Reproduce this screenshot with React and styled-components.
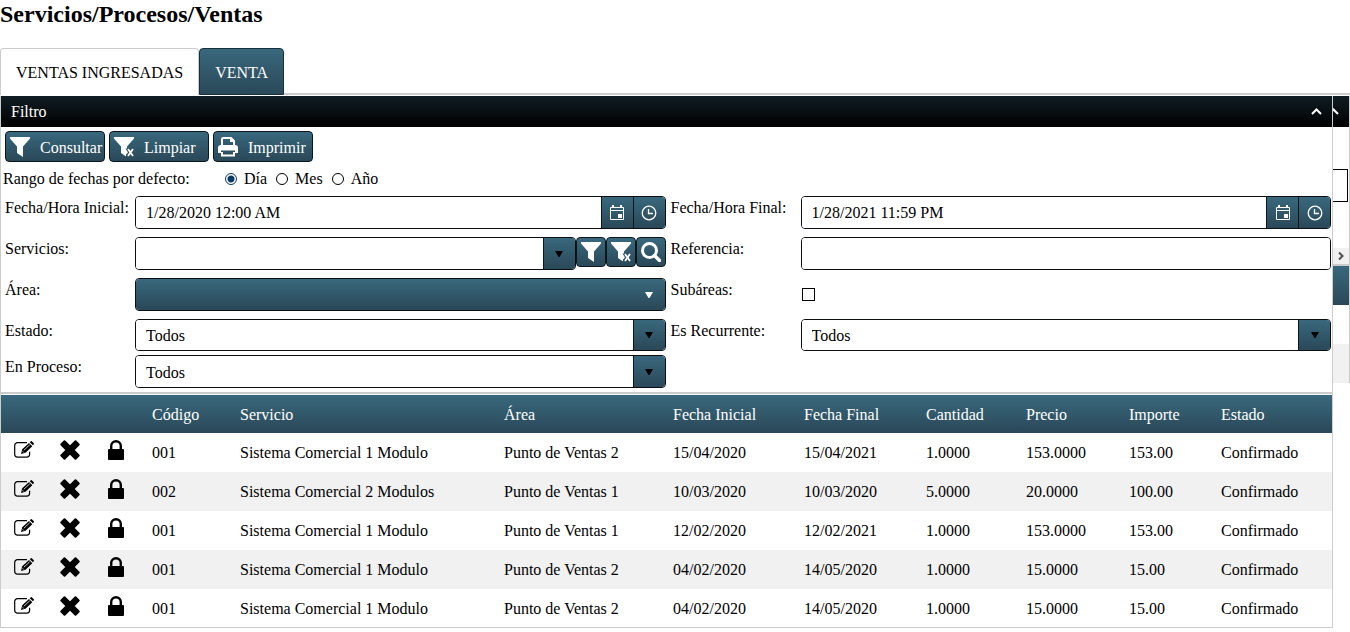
import React from "react";
import styled, { css, createGlobalStyle } from "styled-components";

const GlobalStyle = createGlobalStyle`
  body {
    margin: 0;
    background: #fff;
    color: #000;
    font: 16px/18px "Liberation Serif", "Times New Roman", serif;
  }

  *, *::before, *::after {
    box-sizing: border-box;
  }

  button, input, select {
    font: inherit;
    margin: 0;
  }

  svg {
    flex-shrink: 0;
  }
`;

const steel = css`
  background: linear-gradient(#39687d, #2a4858);
  color: #fff;
`;

const Title = styled.h2`
  margin: 0;
  padding-bottom: 20px;
  font-size: 24px;
  line-height: 28px;
`;

const TabList = styled.div`
  display: flex;
  border-bottom: 2px solid #ccc;
`;

const Tab = styled.button`
  height: 47px;
  margin-bottom: -2px;
  padding: 2px 15px 0;
  border: 1px solid #ccc;
  border-bottom: 0;
  border-radius: 4px 4px 0 0;
  background: #fff;
  color: #000;
  ${props =>
    props.$raised &&
    css`
      ${steel}
      border: 1px solid #16313a;
    `}
`;

const Windows = styled.div`
  display: flex;
  align-items: flex-start;
  padding-top: 1px;
  overflow: hidden;
`;

const Panel = styled.main`
  flex: 1;
  min-width: 0;
  border: 1px solid #ccc;
  border-top: 0;
`;

// The window that stays open behind the main panel
const BackPanel = styled.aside`
  width: 17px;
  overflow: hidden;
  border-right: 1px solid #ccc;
`;

const Bar = styled.div`
  display: flex;
  align-items: center;
  justify-content: space-between;
  height: 31px;
  padding: 0 10px;
  background: linear-gradient(#101d24, #000);
  color: #fff;
`;

const BackBar = styled(Bar)`
  padding: 0;
  margin-left: -5px;
`;

const BackField = styled.div`
  height: 33px;
  margin: 42px 1px 46px 0;
  border: 1px solid #000;
  border-left: 0;
`;

const BackScroll = styled.div`
  display: flex;
  align-items: center;
  justify-content: center;
  height: 18px;
  border-bottom: 2px solid #ccc;
  background: #f0f0f0;
`;

const BackHead = styled.div`
  ${steel}
  height: 39px;
`;

const BackRow = styled.div`
  height: 39px;
  background: ${props => (props.$odd ? "#f1f1f1" : "#fff")};
`;

const Toolbar = styled.div`
  display: flex;
  gap: 4px;
  padding: 4px 4px 0;
`;

const ToolButton = styled.button`
  ${steel}
  display: flex;
  align-items: center;
  gap: 10px;
  width: 100px;
  height: 31px;
  padding: 0 0 0 4px;
  border: 1px solid #0b161b;
  border-radius: 4px;
  white-space: nowrap;

  span {
    padding-top: 2px;
  }
`;

const Range = styled.fieldset`
  display: flex;
  align-items: center;
  height: 34px;
  margin: 0;
  padding: 0 2px;
  border: 0;
`;

const RangeTitle = styled.span`
  width: 222px;
`;

const RadioLabel = styled.label`
  display: flex;
  align-items: center;
  gap: 7px;
  margin-right: 9px;
`;

const Radio = styled.input`
  appearance: none;
  width: 12px;
  height: 12px;
  border: 1px solid #000;
  border-radius: 50%;

  &:checked {
    border-color: #0b3a66;
    background: radial-gradient(#0b3a66 0 3px, #fff 4px);
  }
`;

const Form = styled.form`
  display: grid;
  grid-template-columns: 130px 1fr 135px 1fr;
  row-gap: 8px;
  padding: 0 1px 4px 4px;
`;

const FieldLabel = styled.label`
  padding: 3px 0 0 ${props => (props.$second ? 5 : 0)}px;
`;

const Field = styled.div`
  display: flex;
  height: 33px;
  min-width: 0;
`;

// The last two rows stand closer together than the others
const ShortField = styled(Field)`
  height: 32px;
`;

const TightLabel = styled(FieldLabel)`
  margin-top: -4px;
`;

const TightField = styled(Field)`
  margin-top: -4px;
`;

const Box = styled.div`
  display: flex;
  flex: 1;
  min-width: 0;
  border: 1px solid #0b0f12;
  border-radius: 4px;
  overflow: hidden;
`;

const TextInput = styled.input`
  flex: 1;
  min-width: 0;
  padding: 0 10px;
  border: 0;
  outline: 0;
  background: #fff;
`;

const BoxButton = styled.button`
  ${steel}
  display: flex;
  align-items: center;
  justify-content: center;
  width: 32px;
  padding: 0;
  border: 0;
  border-left: 1px solid #0b161b;
`;

const SmallButton = styled.button`
  ${steel}
  display: flex;
  align-items: center;
  justify-content: center;
  width: 30px;
  height: 30px;
  padding: 0;
  border: 1px solid #0b161b;
  border-radius: 4px;
`;

const Select = styled.select`
  flex: 1;
  min-width: 0;
  padding: 2px 10px 0;
  border: 0;
  outline: 0;
  appearance: none;
  background: ${props => (props.$filled ? "linear-gradient(#39687d, #2a4858)" : "#fff")};
`;

// Arrow laid over the filled drop-down
const FilledArrow = styled.span`
  position: relative;
  display: flex;
  align-items: center;
  width: 0;
  right: 20px;
  pointer-events: none;
`;

const Check = styled.input`
  appearance: none;
  align-self: center;
  width: 13px;
  height: 13px;
  margin-left: 1px;
  border: 1px solid #000;
`;

const Grid = styled.div`
  padding-top: 1px;
  border-top: 2px solid #ccc;
`;

const Table = styled.table`
  width: 100%;
  table-layout: fixed;
  border-collapse: collapse;
`;

const Head = styled.thead`
  ${steel}
`;

const Th = styled.th`
  height: 38px;
  padding: 2px 0 0 13px;
  font-weight: normal;
  text-align: left;
`;

const Td = styled.td`
  height: 39px;
  padding: 1px 0 0 13px;
  white-space: nowrap;
`;

const Row = styled.tr`
  background: #fff;

  &:nth-child(even) {
    background: #f1f1f1;
  }

  &:last-child ${Td} {
    height: 38px;
  }
`;

const ActionCell = styled.td`
  padding: 0 0 5px;
`;

const ActionButton = styled.button`
  display: flex;
  justify-content: center;
  width: 100%;
  padding: 0;
  border: 0;
  background: none;
  color: #000;
`;

const Svg = ({ size = 20, box = 20, children }) => (
  <svg width={size} height={size} viewBox={`0 0 ${box} ${box}`} fill="currentColor" aria-hidden="true">
    {children}
  </svg>
);

const FilterIcon = () => (
  <Svg>
    <path d="M0 0h20v1.500L13 9.500V20l-6-4V9.500L0 1.500z" />
  </Svg>
);

const ClearIcon = () => (
  <Svg>
    <path d="M0 0h20v1.500L13 9.500V11.500h-1.500l2.500 4-2 2v2L7 16V9.500L0 1.500z" />
    <path d="M14 12l5 7M19 12l-5 7" stroke="currentColor" strokeWidth="1.800" />
  </Svg>
);

const PrintIcon = () => (
  <Svg>
    <path d="M4 9V2a1 1 0 0 1 1-1h8l3 3v5M4 15v3.500h12V15" fill="none" stroke="currentColor" strokeWidth="2" />
    <path d="M12 1v4h4V4l-3-3z" />
    <path d="M3 8h14a3 3 0 0 1 3 3v4.500a.5.500 0 0 1-.5.500H17v-2.500H3V16H.5a.5.500 0 0 1-.5-.5V11a3 3 0 0 1 3-3z" />
  </Svg>
);

const SearchIcon = () => (
  <Svg>
    <g fill="none" stroke="currentColor" strokeWidth="3">
      <circle cx="8.500" cy="8.500" r="7" />
      <path d="M13.500 13.500l5 5" strokeWidth="3.500" strokeLinecap="round" />
    </g>
  </Svg>
);

const CalendarIcon = () => (
  <Svg size={16} box={16}>
    <path d="M1.500 2.500h13v12h-13zM1 5.500h14" fill="none" stroke="currentColor" />
    <path d="M3 0h2v3H3zM11 0h2v3h-2zM9 9h4v4H9z" />
  </Svg>
);

const ClockIcon = () => (
  <Svg size={16} box={16}>
    <g fill="none" stroke="currentColor" strokeWidth="1.300">
      <circle cx="8" cy="8" r="6.800" />
      <path d="M7.500 4v4.500H12" />
    </g>
  </Svg>
);

const ArrowIcon = ({ color = "#000" }) => (
  <svg width="8" height="6" viewBox="0 0 8 6" fill={color} aria-hidden="true">
    <path d="M0 0h8L4.500 6h-1z" />
  </svg>
);

const ChevronIcon = () => (
  <svg width="11" height="7" viewBox="0 0 11 7" fill="none" stroke="#fff" strokeWidth="2" aria-hidden="true">
    <path d="M1 6l4.500-4.500L10 6" />
  </svg>
);

const EditIcon = () => (
  <Svg>
    <path
      d="M13 2.700H3.500A2.800 2.800 0 0 0 .7 5.500v8.800a2.800 2.800 0 0 0 2.800 2.800h9.300a2.800 2.800 0 0 0 2.800-2.800v-2.500"
      fill="none"
      stroke="currentColor"
      strokeWidth="1.200"
    />
    <path d="M7 14l1.200-4.700 6.800-6.300 3.300 3.300-6.800 6.400zM15.800 2.200l1-.9q.5-.4 1 0l2 2q.4.500 0 1l-.9 1z" />
    <path d="M9.800 10.300l6-5.600M8.600 11.300l1.200 1.200" stroke="#fff" strokeWidth=".8" />
  </Svg>
);

const DeleteIcon = () => (
  <Svg>
    <path
      d="M4.500 1.300L10 6.700l5.500-5.400 3.200 3.200L13.300 10l5.400 5.500-3.200 3.200L10 13.300l-5.500 5.400-3.200-3.200L6.700 10 1.300 4.500z"
      stroke="currentColor"
      strokeWidth="2"
      strokeLinejoin="round"
    />
  </Svg>
);

const LockIcon = () => (
  <Svg>
    <path d="M5.200 10V6a4.800 4.800 0 0 1 9.600 0v4" fill="none" stroke="currentColor" strokeWidth="2.400" />
    <rect x="2" y="9" width="16" height="11" rx="1" />
  </Svg>
);

const ScrollIcon = () => (
  <svg width="6" height="8" viewBox="0 0 6 8" fill="none" stroke="#505050" strokeWidth="2" aria-hidden="true">
    <path d="M1 .5L4.500 4 1 7.500" />
  </svg>
);

const DateBox = ({ id, value }) => (
  <Box>
    <TextInput id={id} defaultValue={value} />
    <BoxButton type="button" aria-label="Calendario">
      <CalendarIcon />
    </BoxButton>
    <BoxButton type="button" aria-label="Hora">
      <ClockIcon />
    </BoxButton>
  </Box>
);

const SelectBox = ({ id }) => (
  <Box>
    <Select id={id}>
      <option>Todos</option>
    </Select>
    <BoxButton type="button" aria-label="Abrir">
      <ArrowIcon />
    </BoxButton>
  </Box>
);

const columns = [
  { title: "Código", width: 88 },
  { title: "Servicio", width: 264 },
  { title: "Área", width: 169 },
  { title: "Fecha Inicial", width: 131 },
  { title: "Fecha Final", width: 122 },
  { title: "Cantidad", width: 100 },
  { title: "Precio", width: 103 },
  { title: "Importe", width: 92 },
  { title: "Estado" }
];

const sales = [
  ["001", "Sistema Comercial 1 Modulo", "Punto de Ventas 2", "15/04/2020", "15/04/2021", "1.0000", "153.0000", "153.00", "Confirmado"],
  ["002", "Sistema Comercial 2 Modulos", "Punto de Ventas 1", "10/03/2020", "10/03/2020", "5.0000", "20.0000", "100.00", "Confirmado"],
  ["001", "Sistema Comercial 1 Modulo", "Punto de Ventas 1", "12/02/2020", "12/02/2021", "1.0000", "153.0000", "153.00", "Confirmado"],
  ["001", "Sistema Comercial 1 Modulo", "Punto de Ventas 2", "04/02/2020", "14/05/2020", "1.0000", "15.0000", "15.00", "Confirmado"],
  ["001", "Sistema Comercial 1 Modulo", "Punto de Ventas 2", "04/02/2020", "14/05/2020", "1.0000", "15.0000", "15.00", "Confirmado"]
];

const actions = [
  { name: "Editar", Icon: EditIcon },
  { name: "Eliminar", Icon: DeleteIcon },
  { name: "Bloquear", Icon: LockIcon }
];

const Col = styled.col`
  width: ${props => (props.$width ? `${props.$width}px` : "auto")};
`;

const SalesTable = () => (
  <Grid>
    <Table>
      <colgroup>
        {actions.map(a => (
          <Col key={a.name} $width={46} />
        ))}
        {columns.map(c => (
          <Col key={c.title} $width={c.width} />
        ))}
      </colgroup>
      <Head>
        <tr>
          <Th as="td" colSpan={3} />
          {columns.map(c => (
            <Th key={c.title}>{c.title}</Th>
          ))}
        </tr>
      </Head>
      <tbody>
        {sales.map((sale, i) => (
          <Row key={i}>
            {actions.map(({ name, Icon }) => (
              <ActionCell key={name}>
                <ActionButton aria-label={name}>
                  <Icon />
                </ActionButton>
              </ActionCell>
            ))}
            {sale.map((value, j) => (
              <Td key={j}>{value}</Td>
            ))}
          </Row>
        ))}
      </tbody>
    </Table>
  </Grid>
);

const FilterForm = () => (
  <Form>
    <FieldLabel htmlFor="start">Fecha/Hora Inicial:</FieldLabel>
    <Field>
      <DateBox id="start" value="1/28/2020 12:00 AM" />
    </Field>
    <FieldLabel $second htmlFor="end">Fecha/Hora Final:</FieldLabel>
    <Field>
      <DateBox id="end" value="1/28/2021 11:59 PM" />
    </Field>

    <FieldLabel htmlFor="service">Servicios:</FieldLabel>
    <Field>
      <Box>
        <TextInput id="service" />
        <BoxButton type="button" aria-label="Abrir">
          <ArrowIcon />
        </BoxButton>
      </Box>
      <SmallButton type="button" aria-label="Filtrar">
        <FilterIcon />
      </SmallButton>
      <SmallButton type="button" aria-label="Quitar filtro">
        <ClearIcon />
      </SmallButton>
      <SmallButton type="button" aria-label="Buscar">
        <SearchIcon />
      </SmallButton>
    </Field>
    <FieldLabel $second htmlFor="reference">Referencia:</FieldLabel>
    <Field>
      <Box>
        <TextInput id="reference" />
      </Box>
    </Field>

    <FieldLabel htmlFor="area">Área:</FieldLabel>
    <Field>
      <Box>
        <Select id="area" $filled />
        <FilledArrow>
          <ArrowIcon color="#fff" />
        </FilledArrow>
      </Box>
    </Field>
    <FieldLabel $second htmlFor="subareas">Subáreas:</FieldLabel>
    <Field>
      <Check id="subareas" type="checkbox" />
    </Field>

    <FieldLabel htmlFor="state">Estado:</FieldLabel>
    <ShortField>
      <SelectBox id="state" />
    </ShortField>
    <FieldLabel $second htmlFor="recurring">Es Recurrente:</FieldLabel>
    <ShortField>
      <SelectBox id="recurring" />
    </ShortField>

    <TightLabel htmlFor="process">En Proceso:</TightLabel>
    <TightField>
      <SelectBox id="process" />
    </TightField>
  </Form>
);

const App = () => (
  <>
    <GlobalStyle />
    <Title>Servicios/Procesos/Ventas</Title>
    <TabList role="tablist">
      <Tab role="tab" aria-selected="true">VENTAS INGRESADAS</Tab>
      <Tab role="tab" aria-selected="false" $raised>VENTA</Tab>
    </TabList>
    <Windows>
      <Panel>
        <Bar>
          Filtro
          <ChevronIcon />
        </Bar>
        <Toolbar>
          <ToolButton>
            <FilterIcon />
            <span>Consultar</span>
          </ToolButton>
          <ToolButton>
            <ClearIcon />
            <span>Limpiar</span>
          </ToolButton>
          <ToolButton>
            <PrintIcon />
            <span>Imprimir</span>
          </ToolButton>
        </Toolbar>
        <Range>
          <RangeTitle>Rango de fechas por defecto:</RangeTitle>
          {["Día", "Mes", "Año"].map((name, i) => (
            <RadioLabel key={name}>
              <Radio type="radio" name="range" defaultChecked={i === 0} />
              {name}
            </RadioLabel>
          ))}
        </Range>
        <FilterForm />
        <SalesTable />
      </Panel>
      <BackPanel>
        <BackBar>
          <ChevronIcon />
        </BackBar>
        <BackField />
        <BackScroll>
          <ScrollIcon />
        </BackScroll>
        <BackHead />
        <BackRow />
        <BackRow $odd />
      </BackPanel>
    </Windows>
  </>
);

export default App;
